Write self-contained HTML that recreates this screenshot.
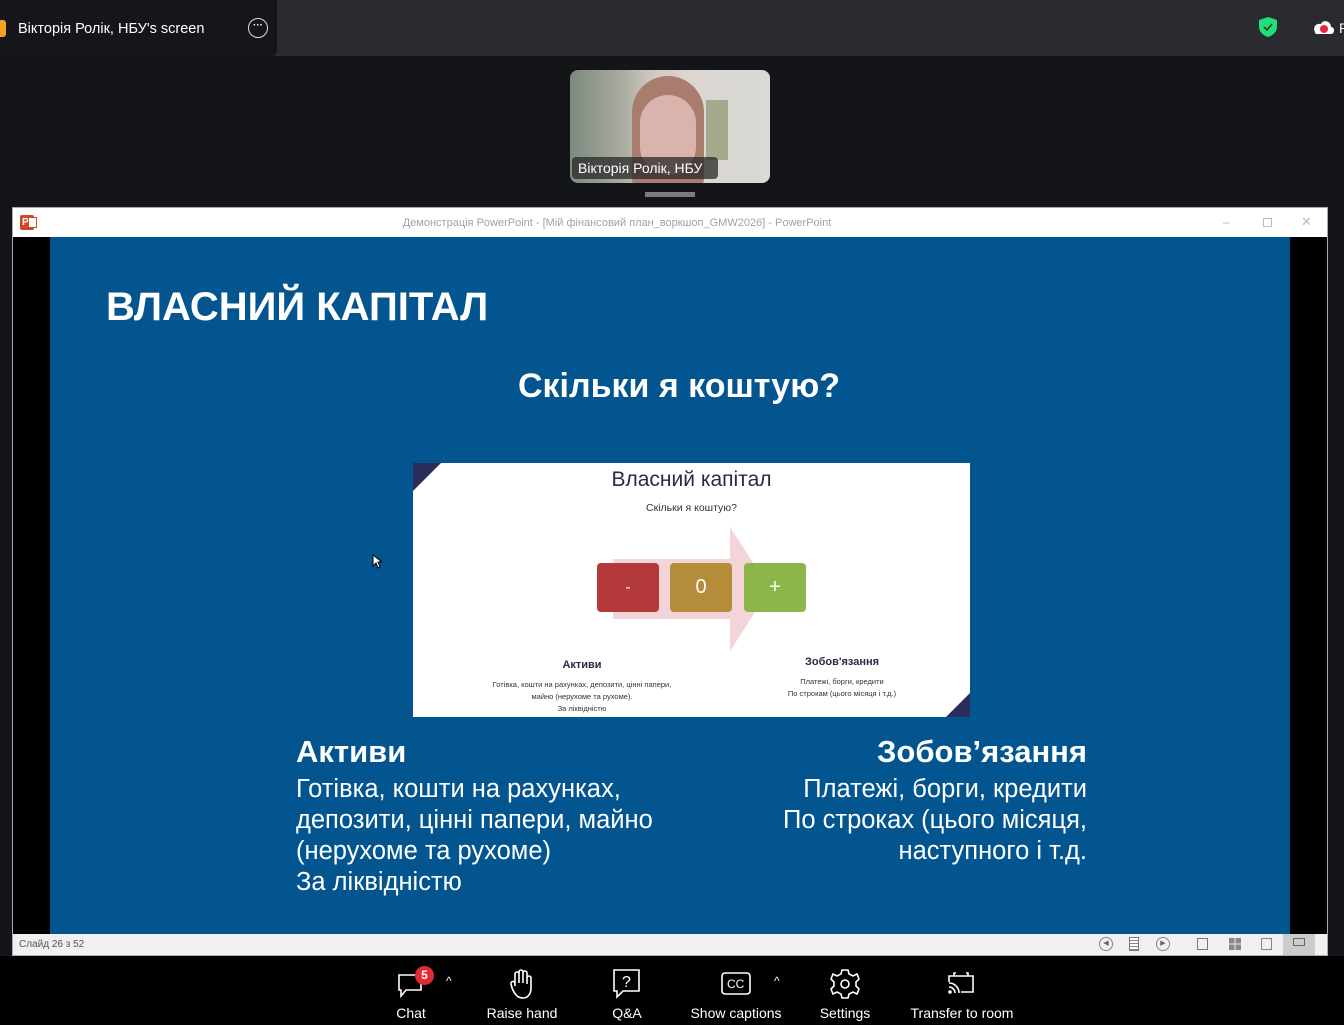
<!DOCTYPE html>
<html><head><meta charset="utf-8">
<style>
*{margin:0;padding:0;box-sizing:border-box}
body{width:1344px;height:1025px;background:#131518;position:relative;overflow:hidden;font-family:"Liberation Sans","DejaVu Sans",sans-serif}
.abs{position:absolute}
.tb{font-size:14px;color:#fff;text-align:center;width:120px}
</style></head><body>
<div class="abs" style="left:0;top:0;width:1344px;height:56px;background:#2a2b2e"></div>
<div class="abs" style="left:0;top:0;width:277px;height:56px;background:#141619;border-bottom-right-radius:6px"></div>
<div class="abs" style="left:0;top:20px;width:6px;height:17px;background:#f4a221;border-radius:0 3px 3px 0"></div>
<div class="abs" style="left:18px;top:21px;font-size:14.5px;color:#fff">Вікторія Ролік, НБУ's screen</div>
<div class="abs" style="left:248px;top:18px;width:20px;height:20px;border:1.5px solid #ddd;border-radius:50%;color:#fff;font-size:10px;line-height:14px;text-align:center;font-weight:bold">···</div>
<svg class="abs" style="left:1258px;top:16px" width="20" height="22" viewBox="0 0 20 22"><path d="M10 1 L19 4 V11 C19 16 14 20 10 21 C6 20 1 16 1 11 V4Z" fill="#1fe07a"/><path d="M6 11 L9 14 L14 8" stroke="#1a3a2a" stroke-width="1.6" fill="none"/></svg>
<svg class="abs" style="left:1310px;top:18px" width="26" height="18" viewBox="0 0 26 18"><path d="M6 16 H21 C25 16 25 9 21 9 C21 3 13 1 11 6 C5 5 2 10 6 16Z" fill="#fff"/><circle cx="14" cy="11" r="4" fill="#e8283a"/></svg>
<div class="abs" style="left:1339px;top:20px;font-size:14px;color:#fff">R</div>

<div class="abs" style="left:570px;top:70px;width:200px;height:113px;border-radius:8px;overflow:hidden;background:linear-gradient(90deg,#7c8a80 0%,#a6aa9c 25%,#cfc6bf 40%,#dcd6d1 60%,#d9d9d5 100%)">
 <div class="abs" style="left:62px;top:6px;width:72px;height:120px;border-radius:40px 40px 20px 20px;background:#a97d6d"></div>
 <div class="abs" style="left:70px;top:25px;width:56px;height:80px;border-radius:30px;background:#d9b3ac"></div>
 <div class="abs" style="left:136px;top:30px;width:22px;height:60px;background:#7d8a5a;opacity:.6"></div>
 <div class="abs" style="left:2px;top:87px;width:146px;height:22px;background:rgba(40,40,40,.75);border-radius:4px"></div>
 <div class="abs" style="left:8px;top:90px;font-size:14px;color:#fff">Вікторія Ролік, НБУ</div>
</div>
<div class="abs" style="left:645px;top:192px;width:50px;height:5px;background:#7b7c7e"></div>

<div class="abs" style="left:12px;top:207px;width:1316px;height:749px;background:#fff;border:1px solid #a9a9b3"></div>
<div class="abs" style="left:20px;top:215px;width:14px;height:15px;background:#d24726;border-radius:2px;color:#fff;font-size:10px;font-weight:bold;line-height:15px;padding-left:2px">P</div>
<div class="abs" style="left:28px;top:217px;width:9px;height:11px;border:1px solid #d24726;background:#fff"></div>
<div class="abs" style="left:0;width:1344px;top:217px;text-align:center;font-size:11px;color:#a0a0a8;padding-right:110px">Демонстрація PowerPoint - [Мій фінансовий план_воркшоп_GMW2026] - PowerPoint</div>
<div class="abs" style="left:1223px;top:215px;font-size:12px;color:#bbb">–</div>
<div class="abs" style="left:1263px;top:218px;width:9px;height:9px;border:1px solid #bbb"></div>
<div class="abs" style="left:1301px;top:214px;font-size:13px;color:#bbb">✕</div>
<div class="abs" style="left:13px;top:237px;width:1314px;height:697px;background:#000"></div>
<div class="abs" style="left:50px;top:237px;width:1240px;height:697px;background:#03558f"></div>

<div class="abs" style="left:106px;top:285px;font-size:40px;font-weight:bold;color:#fff">ВЛАСНИЙ КАПІТАЛ</div>
<div class="abs" style="left:0;width:1358px;top:367px;text-align:center;font-size:34px;font-weight:bold;color:#fff">Скільки я коштую?</div>

<div class="abs" style="left:413px;top:463px;width:557px;height:254px;background:#fff;overflow:hidden">
 <div class="abs" style="left:0;top:0;width:0;height:0;border-top:28px solid #2a2c5c;border-right:28px solid transparent"></div>
 <div class="abs" style="right:0;bottom:0;width:0;height:0;border-bottom:24px solid #2a2c5c;border-left:24px solid transparent"></div>
 <div class="abs" style="left:0;width:557px;top:5px;text-align:center;font-size:21px;color:#2a2a44">Власний капітал</div>
 <div class="abs" style="left:0;width:557px;top:39px;text-align:center;font-size:10.5px;color:#333">Скільки я коштую?</div>
 <div class="abs" style="left:200px;top:96px;width:117px;height:60px;background:#f3d4d8"></div>
 <div class="abs" style="left:317px;top:64px;width:0;height:0;border-top:62px solid transparent;border-bottom:62px solid transparent;border-left:40px solid #f3d4d8"></div>
 <div class="abs" style="left:184px;top:100px;width:62px;height:49px;background:#b4393a;border-radius:4px;color:#eee;text-align:center;line-height:49px;font-size:16px">-</div>
 <div class="abs" style="left:257px;top:100px;width:62px;height:49px;background:#b58d3a;border-radius:4px;color:#fff;text-align:center;line-height:49px;font-size:20px">0</div>
 <div class="abs" style="left:331px;top:100px;width:62px;height:49px;background:#8db64a;border-radius:4px;color:#fff;text-align:center;line-height:49px;font-size:20px">+</div>
 <div class="abs" style="left:100px;width:138px;top:196px;text-align:center;font-size:11px;font-weight:bold;color:#2a2a44">Активи</div>
 <div class="abs" style="left:70px;width:198px;top:216px;text-align:center;font-size:7.5px;line-height:12px;color:#333">Готівка, кошти на рахунках, депозити, цінні папери, майно (нерухоме та рухоме).<br>За ліквідністю</div>
 <div class="abs" style="left:350px;width:158px;top:193px;text-align:center;font-size:11px;font-weight:bold;color:#2a2a44">Зобов'язання</div>
 <div class="abs" style="left:350px;width:158px;top:213px;text-align:center;font-size:7.5px;line-height:12px;color:#333">Платежі, борги, кредити<br>По строкам (цього місяця і т.д.)</div>
</div>

<svg class="abs" style="left:372px;top:554px" width="10" height="15" viewBox="0 0 10 15"><path d="M1 1 V12 L4 9 L6 14 L8 13 L6 8 H10Z" fill="#fff" stroke="#000" stroke-width="1"/></svg>

<div class="abs" style="left:296px;top:734px;font-size:31px;font-weight:bold;color:#fff">Активи</div>
<div class="abs" style="left:296px;top:774px;font-size:25.5px;line-height:31px;color:#fff">Готівка, кошти на рахунках,<br>депозити, цінні папери, майно<br>(нерухоме та рухоме)<br>За ліквідністю</div>
<div class="abs" style="right:257px;top:734px;font-size:31px;font-weight:bold;color:#fff;text-align:right">Зобов’язання</div>
<div class="abs" style="right:257px;top:774px;font-size:25.5px;line-height:31px;color:#fff;text-align:right">Платежі, борги, кредити<br>По строках (цього місяця,<br>наступного і т.д.</div>

<div class="abs" style="left:13px;top:934px;width:1314px;height:21px;background:#f0eff2"></div>
<div class="abs" style="left:19px;top:939px;font-size:10px;color:#555">Слайд 26 з 52</div>
<div class="abs" style="left:1099px;top:937px;width:14px;height:14px;border:1px solid #888;border-radius:50%;font-size:7px;line-height:12px;text-align:center;color:#666">◀</div>
<div class="abs" style="left:1129px;top:937px;width:10px;height:14px;border:1px solid #777;background:repeating-linear-gradient(#fff 0 2px,#888 2px 3px)"></div>
<div class="abs" style="left:1156px;top:937px;width:14px;height:14px;border:1px solid #888;border-radius:50%;font-size:7px;line-height:12px;text-align:center;color:#666">▶</div>
<div class="abs" style="left:1197px;top:938px;width:11px;height:12px;border:1px solid #777"></div>
<div class="abs" style="left:1229px;top:938px;width:12px;height:12px;background:linear-gradient(90deg,transparent 45%,#f0eff2 45% 55%,transparent 55%),linear-gradient(transparent 45%,#f0eff2 45% 55%,transparent 55%),#888"></div>
<div class="abs" style="left:1261px;top:938px;width:11px;height:12px;border:1px solid #888"></div>
<div class="abs" style="left:1283px;top:934px;width:32px;height:21px;background:#cbcbcb"></div>
<div class="abs" style="left:1293px;top:938px;width:12px;height:8px;border:1px solid #666"></div>

<div class="abs" style="left:0;top:956px;width:1344px;height:69px;background:#000"></div>
<svg class="abs" style="left:396px;top:970px" width="30" height="30" viewBox="0 0 30 30" fill="none" stroke="#fff" stroke-width="1.6"><path d="M3 5 H25 V20 H10 L5 26 V20 H3Z"/></svg>
<div class="abs" style="left:415px;top:966px;width:19px;height:19px;border-radius:50%;background:#e02b32;color:#fff;font-size:12px;font-weight:bold;text-align:center;line-height:19px">5</div>
<div class="abs" style="left:446px;top:974px;font-size:12px;color:#fff">^</div>
<div class="abs tb" style="left:351px;top:1005px">Chat</div>
<svg class="abs" style="left:509px;top:968px" width="26" height="32" viewBox="0 0 26 32" fill="none" stroke="#fff" stroke-width="1.6"><path d="M6 18 V6 a2 2 0 0 1 4 0 V15 V4 a2 2 0 0 1 4 0 V15 V5 a2 2 0 0 1 4 0 V16 V10 a2 2 0 0 1 4 0 V20 C22 27 18 30 14 30 C9 30 6 27 3 20 L2 16 a2 2 0 0 1 4 -1Z"/></svg>
<div class="abs tb" style="left:462px;top:1005px">Raise hand</div>
<svg class="abs" style="left:612px;top:968px" width="30" height="32" viewBox="0 0 30 32" fill="none" stroke="#fff" stroke-width="1.6"><path d="M2 2 H27 V23 H11 L5 29 V23 H2Z"/><text x="10" y="19" font-size="16" fill="#fff" stroke="none" font-family="Liberation Sans">?</text></svg>
<div class="abs tb" style="left:567px;top:1005px">Q&amp;A</div>
<svg class="abs" style="left:720px;top:971px" width="32" height="26" viewBox="0 0 32 26" fill="none" stroke="#fff" stroke-width="1.6"><rect x="2" y="2" width="28" height="21" rx="3"/><text x="7" y="17" font-size="12" fill="#fff" stroke="none" font-family="Liberation Sans">CC</text></svg>
<div class="abs" style="left:774px;top:974px;font-size:12px;color:#fff">^</div>
<div class="abs tb" style="left:676px;top:1005px">Show captions</div>
<svg class="abs" style="left:830px;top:968px" width="30" height="32" viewBox="0 0 30 32" fill="none" stroke="#fff" stroke-width="1.6"><path d="M12 2 H18 L19 6 L23 8 L27 6 L29 11 L26 14 V18 L29 21 L27 26 L23 24 L19 26 L18 30 H12 L11 26 L7 24 L3 26 L1 21 L4 18 V14 L1 11 L3 6 L7 8 L11 6Z"/><circle cx="15" cy="16" r="4"/></svg>
<div class="abs tb" style="left:785px;top:1005px">Settings</div>
<svg class="abs" style="left:946px;top:970px" width="30" height="28" viewBox="0 0 30 28" fill="none" stroke="#fff" stroke-width="1.6"><path d="M8 6 V3 H10 M20 3 H22 V6"/><path d="M3 12 V6 H27 V22 H15"/><path d="M3 17 a6 6 0 0 1 6 6 M3 13 a10 10 0 0 1 10 10"/><circle cx="4" cy="22" r="1" fill="#fff"/></svg>
<div class="abs tb" style="left:897px;top:1005px;width:130px">Transfer to room</div>
</body></html>
